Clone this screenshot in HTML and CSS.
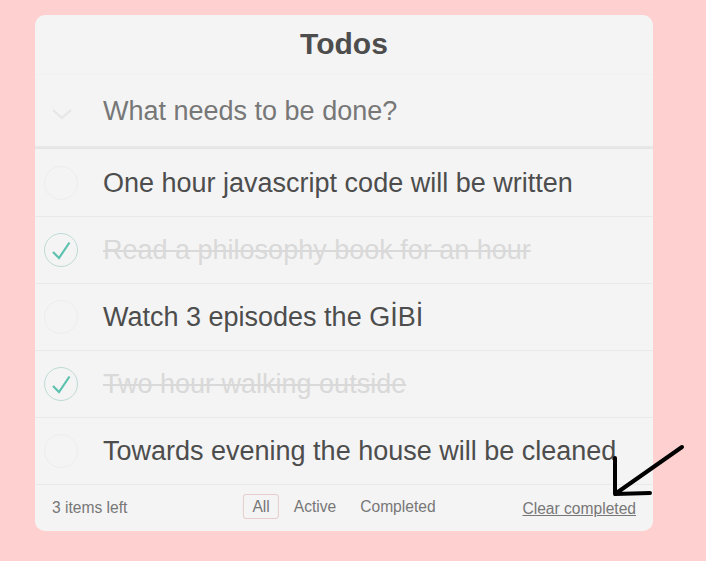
FILE: index.html
```html
<!DOCTYPE html>
<html>
<head>
<meta charset="utf-8">
<title>Todos</title>
<link rel="stylesheet" href="styles.css">
</head>
<body>
<section class="todoapp">
  <header class="header">
    <h1>Todos</h1>
  </header>
  <div class="new-row">
    <span class="toggle-all">
      <svg width="22" height="12" viewBox="0 0 22 12"><path d="M2 2 L11 10 L20 2" fill="none" stroke="#e6e6e6" stroke-width="2.2"/></svg>
    </span>
    <span class="new-todo">What needs to be done?</span>
  </div>
  <ul class="todo-list">
    <li class="todo"><span class="check"></span><span class="label">One hour javascript code will be written</span></li>
    <li class="todo done"><span class="check"><svg width="34" height="34" viewBox="0 0 34 34"><path d="M9 19 L15 25 L25.5 9.5" fill="none" stroke="#5dc2af" stroke-width="2.2"/></svg></span><span class="label">Read a philosophy book for an hour</span></li>
    <li class="todo"><span class="check"></span><span class="label">Watch 3 episodes the GİBİ</span></li>
    <li class="todo done"><span class="check"><svg width="34" height="34" viewBox="0 0 34 34"><path d="M9 19 L15 25 L25.5 9.5" fill="none" stroke="#5dc2af" stroke-width="2.2"/></svg></span><span class="label">Two hour walking outside</span></li>
    <li class="todo"><span class="check"></span><span class="label">Towards evening the house will be cleaned</span></li>
  </ul>
  <footer class="footer">
    <span class="count">3 items left</span>
    <ul class="filters">
      <li class="filter selected">All</li>
      <li class="filter">Active</li>
      <li class="filter">Completed</li>
    </ul>
    <span class="clear">Clear completed</span>
  </footer>
</section>
<svg class="arrow" width="706" height="561" viewBox="0 0 706 561">
  <path d="M682 447 L615 494 M615 458 L615 494 L650 493" fill="none" stroke="#000" stroke-width="4" stroke-linecap="round" stroke-linejoin="round"/>
</svg>
</body>
</html>
```
FILE: styles.css
```css
html, body {
  margin: 0;
  padding: 0;
}
body {
  background: #ffd0d0;
  font-family: "Liberation Sans", Arial, sans-serif;
  position: relative;
  width: 706px;
  height: 561px;
  overflow: hidden;
}
.todoapp {
  margin: 15px 0 0 35px;
  width: 618px;
  background: #f4f4f4;
  border-radius: 10px;
  overflow: hidden;
}
.header {
  height: 60px;
  display: flex;
  align-items: center;
  justify-content: center;
  border-bottom: 1px solid #f1f1f1;
  box-sizing: border-box;
}
.header h1 {
  margin: 0;
  padding-bottom: 1px;
  font-size: 30px;
  font-weight: bold;
  color: #4d4d4d;
}
.new-row {
  height: 74px;
  display: flex;
  align-items: center;
  box-shadow: inset 0 -2px 1px rgba(0, 0, 0, 0.05);
  box-sizing: border-box;
  border-bottom: 1px solid #e4e4e4;
}
.toggle-all {
  width: 54px;
  margin-right: 14px;
  display: flex;
  justify-content: center;
  padding-top: 5px;
}
.new-todo {
  font-size: 27px;
  color: #777;
}
.todo-list {
  list-style: none;
  margin: 0;
  padding: 0;
}
.todo {
  height: 67px;
  display: flex;
  align-items: center;
  border-bottom: 1px solid #e9e9e9;
  box-sizing: border-box;
}
.todo:first-child {
  height: 68px;
}
.check {
  width: 34px;
  height: 34px;
  margin: 0 25px 0 9px;
  border: 1px solid #ededed;
  border-radius: 50%;
  box-sizing: border-box;
  display: flex;
  align-items: center;
  justify-content: center;
  flex: none;
}
.check svg {
  display: block;
  flex: none;
}
.done .check {
  border-color: #bddad5;
}
.label {
  font-size: 27px;
  color: #4d4d4d;
  padding-top: 1px;
}
.done .label {
  color: #d9d9d9;
  text-decoration: line-through;
}
.footer {
  height: 46px;
  display: flex;
  align-items: center;
  justify-content: space-between;
  padding: 0 17px;
  font-size: 15.6px;
  color: #777;
  position: relative;
}
.count {
  width: 160px;
}
.filters {
  list-style: none;
  margin: 0;
  padding: 0;
  display: flex;
  gap: 5px;
  position: absolute;
  left: 50%;
  top: 9px;
  transform: translateX(-50%);
}
.filter {
  padding: 3px 8.5px;
  border: 1px solid transparent;
  border-radius: 3px;
  line-height: 17px;
}
.filter.selected {
  border-color: rgba(175, 47, 47, 0.2);
}
.clear {
  text-decoration: underline;
  padding-top: 1px;
}
.arrow {
  position: absolute;
  left: 0;
  top: 0;
}
```
